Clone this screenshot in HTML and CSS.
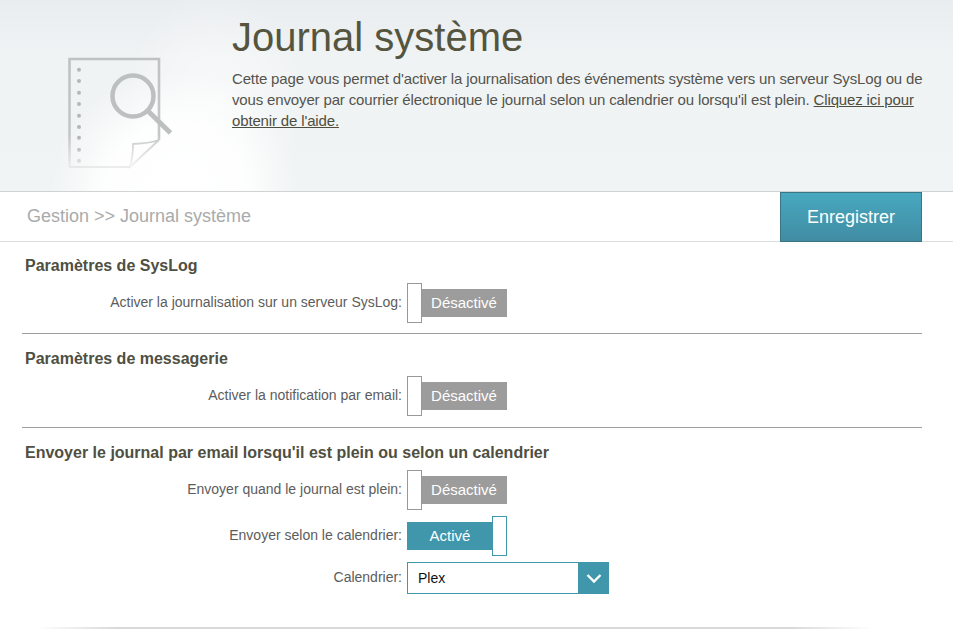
FILE: index.html
```html
<!DOCTYPE html>
<html lang="fr">
<head>
<meta charset="utf-8">
<title>Journal système</title>
<link rel="stylesheet" href="styles.css">
</head>
<body>
<header class="hero">
  <div class="hero-icon">
    <svg width="110" height="116" viewBox="0 0 110 116" fill="none">
      <defs>
        <linearGradient id="fade" gradientUnits="userSpaceOnUse" x1="0" y1="0" x2="0" y2="112">
          <stop offset="0" stop-color="#bfc2c3"/>
          <stop offset="0.7" stop-color="#c4c7c8"/>
          <stop offset="1" stop-color="#c8cbcc" stop-opacity="0.15"/>
        </linearGradient>
      </defs>
      <path d="M1.500 110V2H91V83" stroke="url(#fade)" stroke-width="2.600"/>
      <path d="M1.500 110H62" stroke="#c8cbcc" stroke-opacity=".35" stroke-width="2"/>
      <path d="M62 110L91 83C84 86 75 86.500 65 87C65 95 64 103 62 110Z" stroke="url(#fade)" stroke-width="1.800"/>
      <g fill="#b4b7b8">
        <circle cx="11" cy="12.700" r="2"/><circle cx="11" cy="24" r="2"/><circle cx="11" cy="35.700" r="2"/>
        <circle cx="11" cy="47" r="2"/><circle cx="11" cy="58.700" r="2"/><circle cx="11" cy="70" r="2"/>
        <circle cx="11" cy="80.700" r="2"/><circle cx="11" cy="92.700" r="2" opacity=".8"/><circle cx="11" cy="103.700" r="2" opacity=".45"/>
      </g>
      <circle cx="65" cy="39" r="20.500" stroke="#bdc0c1" stroke-width="4.500"/>
      <path d="M80 54L102.500 76" stroke="#bdc0c1" stroke-width="5"/>
    </svg>
  </div>
  <div class="hero-text">
    <h1>Journal système</h1>
    <p>Cette page vous permet d'activer la journalisation des événements système vers un serveur SysLog ou de vous envoyer par courrier électronique le journal selon un calendrier ou lorsqu'il est plein. <a href="#">Cliquez ici pour obtenir de l'aide.</a></p>
  </div>
</header>

<div class="crumbs">
  <span class="path">Gestion &gt;&gt; Journal système</span>
  <button class="save" type="button">Enregistrer</button>
</div>

<main class="content">
  <section class="group">
    <h2>Paramètres de SysLog</h2>
    <div class="row">
      <span class="label">Activer la journalisation sur un serveur SysLog:</span>
      <span class="toggle off"><span class="knob"></span><span class="track">Désactivé</span></span>
    </div>
  </section>
  <section class="group second">
    <h2>Paramètres de messagerie</h2>
    <div class="row">
      <span class="label">Activer la notification par email:</span>
      <span class="toggle off"><span class="knob"></span><span class="track">Désactivé</span></span>
    </div>
  </section>
  <section class="group last">
    <h2>Envoyer le journal par email lorsqu'il est plein ou selon un calendrier</h2>
    <div class="row">
      <span class="label">Envoyer quand le journal est plein:</span>
      <span class="toggle off"><span class="knob"></span><span class="track">Désactivé</span></span>
    </div>
    <div class="row">
      <span class="label">Envoyer selon le calendrier:</span>
      <span class="toggle on"><span class="track">Activé</span><span class="knob"></span></span>
    </div>
    <div class="row select-row">
      <span class="label">Calendrier:</span>
      <span class="select"><span class="value">Plex</span><span class="arrow">
        <svg width="16" height="11" viewBox="0 0 16 11" fill="none"><path d="M1.500 2L8 8.500L14.500 2" stroke="#fff" stroke-width="2.400"/></svg>
      </span></span>
    </div>
  </section>
</main>
<div class="foot-line"></div>
</body>
</html>
```

FILE: styles.css
```css
* { box-sizing: border-box; }
html, body { margin: 0; padding: 0; }
body {
  width: 953px;
  height: 634px;
  overflow: hidden;
  background: #fff;
  font-family: "Liberation Sans", Arial, sans-serif;
  color: #5a5a52;
}
.hero {
  height: 192px;
  display: flex;
  border-bottom: 1px solid #cfd3d4;
  background:
    radial-gradient(ellipse 125px 125px at 175px 195px, #fff 0%, rgba(255,255,255,.92) 55%, rgba(255,255,255,0) 100%),
    radial-gradient(ellipse 90px 110px at 215px 100px, rgba(255,255,255,.55) 0%, rgba(255,255,255,0) 100%),
    linear-gradient(180deg, #e9edef 0%, #f0f3f4 30%, #f0f4f4 100%);
}
.hero-icon {
  width: 232px;
  flex: none;
  padding: 57px 0 0 68px;
}
.hero-icon svg { display: block; }
.hero-text { width: 700px; padding-top: 14px; }
h1 {
  margin: 0;
  font-size: 40px;
  line-height: 46px;
  font-weight: 400;
  color: #55553f;
}
.hero-text p {
  margin: 8px 0 0;
  font-size: 15px;
  line-height: 21px;
  letter-spacing: -0.15px;
  color: #54544e;
}
.hero-text a { color: #4e4e40; text-decoration: underline; }
.crumbs {
  height: 50px;
  display: flex;
  align-items: stretch;
  justify-content: space-between;
  padding: 0 31px 0 27px;
  border-bottom: 1px solid #dcdfe0;
}
.path {
  align-self: center;
  font-size: 18px;
  color: #a9abab;
}
.save {
  width: 142px;
  height: 50px;
  margin: 0;
  padding: 0;
  font: 18px "Liberation Sans", Arial, sans-serif;
  color: #fff;
  border: 1px solid #3a7585;
  background: linear-gradient(180deg, #47a8bf 0%, #418ca3 100%);
}
.content { padding: 0 31px 0 22px; }
.group {
  height: 92px;
  padding-top: 14px;
  border-bottom: 1px solid #9c9e9e;
  margin-bottom: 1px;
}
.group.second { height: 93px; }
.group.last { height: auto; border-bottom: 0; margin-bottom: 0; }
h2 {
  margin: 0 0 0 3px;
  font-size: 16px;
  line-height: 19px;
  font-weight: 700;
  color: #4f4f42;
}
.row {
  display: flex;
  align-items: center;
  height: 40px;
  margin-top: 6px;
}
.group .row:first-of-type { margin-top: 8px; }
.label {
  width: 380px;
  padding-bottom: 2px;
  text-align: right;
  font-size: 14px;
  color: #5c5c5c;
  flex: none;
}
.toggle {
  display: flex;
  align-items: center;
  margin-left: 5px;
}
.knob {
  display: block;
  width: 15px;
  height: 40px;
  background: #fff;
  border: 1px solid #989898;
  position: relative;
  z-index: 1;
}
.track {
  display: block;
  width: 86px;
  height: 28px;
  line-height: 27px;
  text-align: center;
  font-size: 15px;
  color: #fff;
  background: #9c9c9c;
  margin-left: -1px;
}
.toggle.on .track { background: #4096ab; margin-left: 0; margin-right: -1px; }
.toggle.on .knob { border-color: #4096ab; }
.row.select-row { height: 32px; margin-top: 6px; }
.select {
  display: flex;
  width: 202px;
  height: 32px;
  margin-left: 5px;
  border: 1px solid #4096ab;
  background: #fff;
}
.value {
  flex: 1;
  padding-left: 10px;
  line-height: 31px;
  font-size: 14px;
  color: #111;
}
.arrow {
  width: 31px;
  margin: -1px -1px -1px 0;
  background: #4096ab;
  display: flex;
  align-items: center;
  justify-content: center;
}
.foot-line {
  height: 2px;
  margin: 33px 0 0 36px;
  width: 836px;
  background: linear-gradient(90deg, rgba(214,214,214,0) 0%, #d8d8d8 10%, #d8d8d8 90%, rgba(214,214,214,0) 100%);
}
```
